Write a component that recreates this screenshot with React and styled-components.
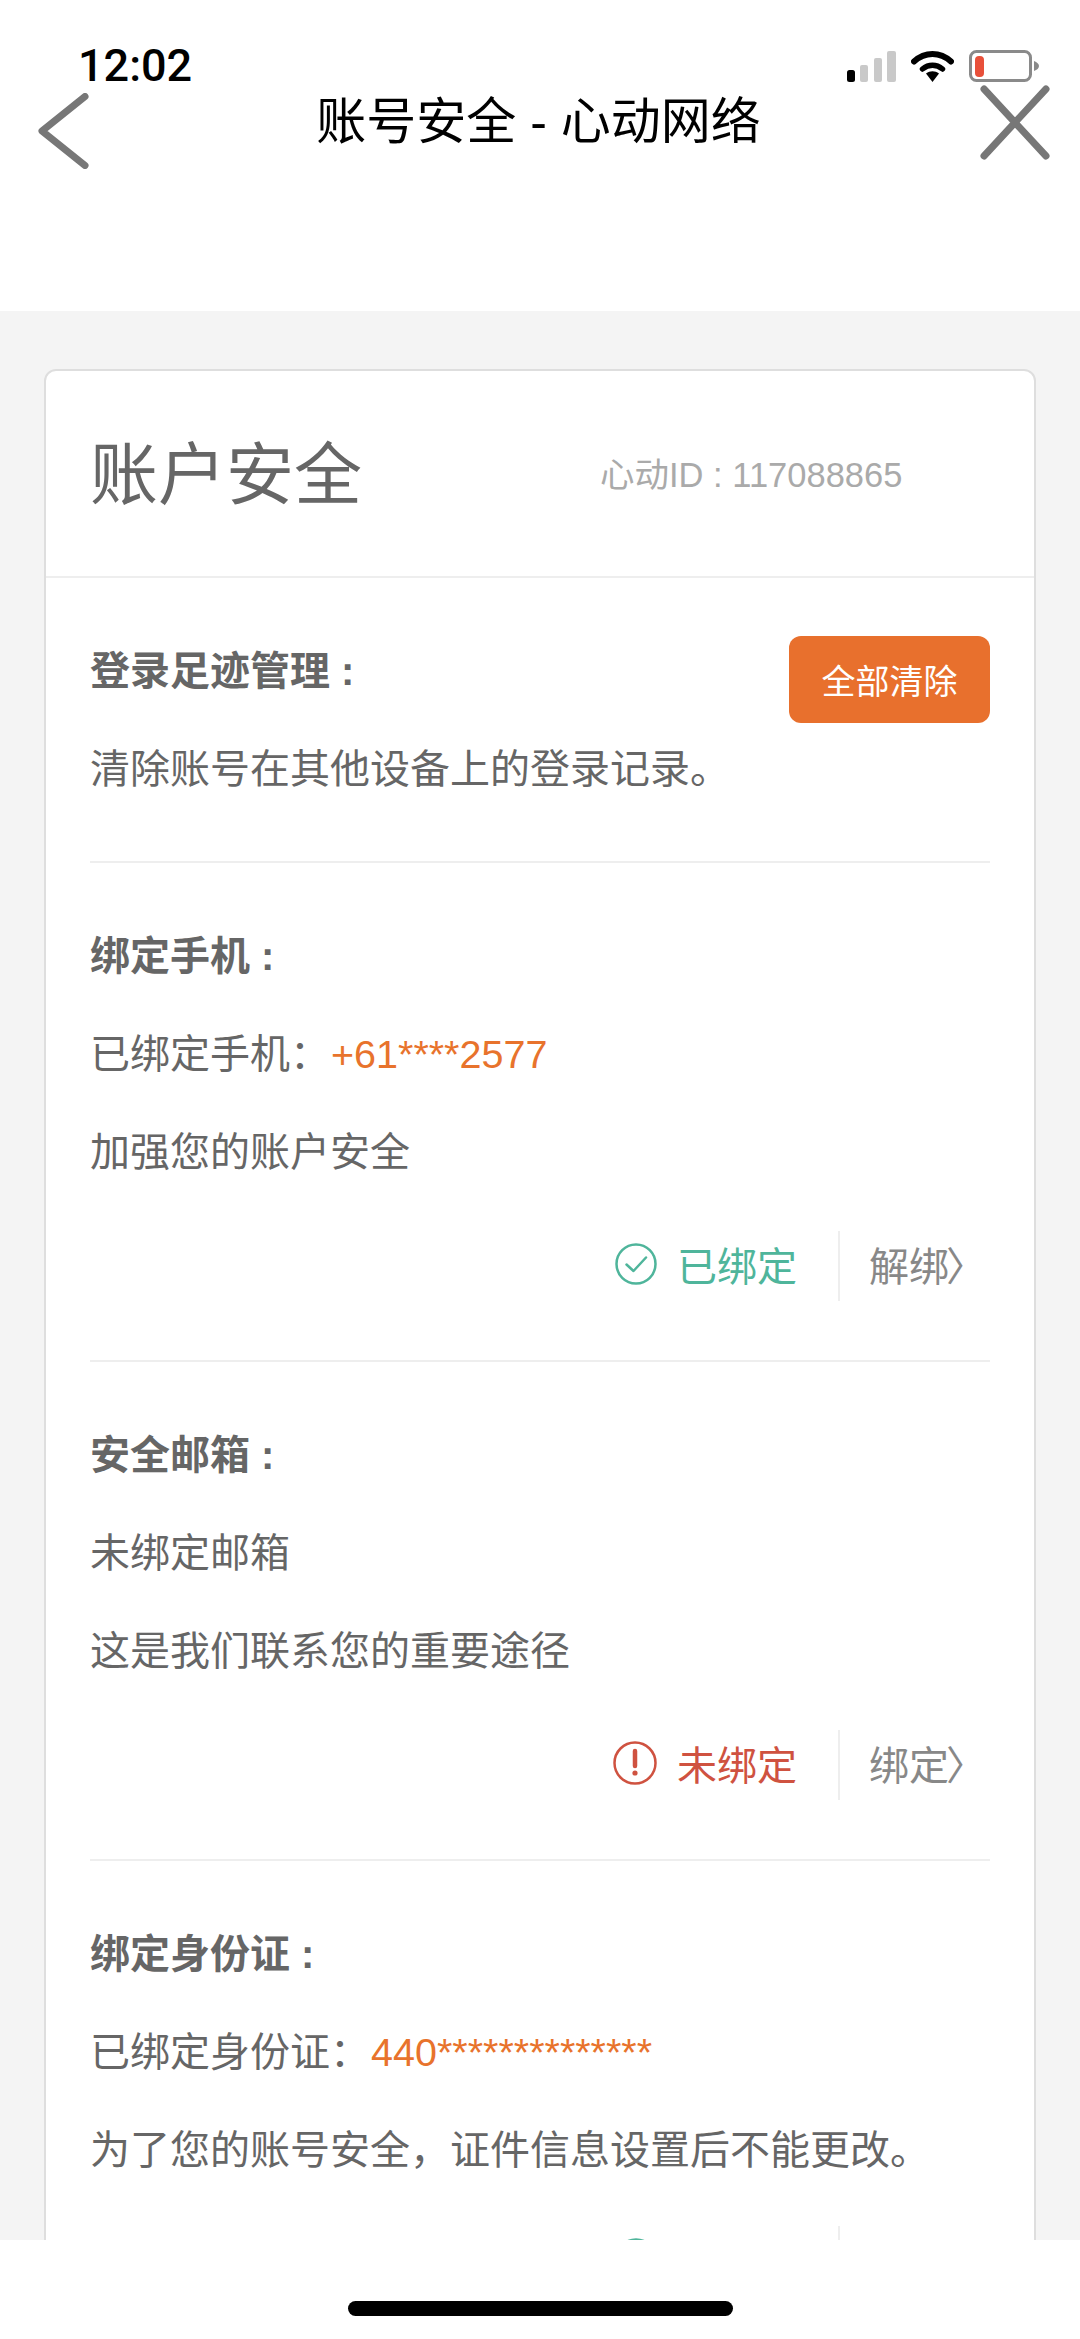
import React from 'react';
import styled, { createGlobalStyle } from 'styled-components';

const GlobalStyle = createGlobalStyle`
  html, body {
    margin: 0;
    padding: 0;
    background: #f4f4f4;
  }
  * {
    box-sizing: border-box;
  }
`;

const FONT = `"Liberation Sans", "Noto Sans CJK SC", sans-serif`;

const Screen = styled.div`
  position: relative;
  width: 1080px;
  height: 2339px;
  overflow: hidden;
  background: #f4f4f4;
  font-family: ${FONT};
  color: #666;
`;

const Top = styled.header`
  height: 311px;
  background: #fff;
`;

const StatusBar = styled.div`
  display: flex;
  justify-content: space-between;
  align-items: center;
  height: 84px;
  padding: 48px 41px 0 78px;
`;

const Time = styled.span`
  font-family: Roboto, sans-serif;
  font-size: 45px;
  font-weight: 500;
  line-height: 36px;
  color: #000;
`;

const StatusIcons = styled.div`
  display: flex;
  align-items: center;
  gap: 15px;
`;

const Nav = styled.div`
  display: flex;
  justify-content: space-between;
  align-items: flex-start;
  padding: 0 30px 0 38px;
`;

const NavIcon = styled.svg`
  display: block;
  flex: none;
  margin-top: ${({ $top }) => $top}px;
`;

const NavTitle = styled.h1`
  margin: 0;
  font-size: 50px;
  font-weight: 400;
  line-height: 76px;
  color: #000;
  transform: translateX(4px);
`;

const Card = styled.main`
  margin: 58px 44px 0;
  background: #fff;
  border: 2px solid #dedede;
  border-radius: 12px;
`;

const CardHead = styled.div`
  display: flex;
  align-items: center;
  height: 207px;
  padding-left: 44px;
  border-bottom: 2px solid #eee;
`;

const CardTitle = styled.h2`
  margin: 0 0 8px;
  font-size: 68px;
  font-weight: 400;
  color: #666;
`;

const AccountId = styled.span`
  margin: 0 0 4px 238px;
  font-size: 34.5px;
  color: #aaa;
`;

const Section = styled.section`
  position: relative;
  margin: 0 44px;
  padding: 44px 0 ${({ $tight }) => ($tight ? 43 : 59)}px;
  border-bottom: ${({ $last }) => ($last ? 'none' : '2px solid #eee')};
`;

const SectionTitle = styled.h3`
  margin: 0;
  font-size: 40px;
  font-weight: 700;
  line-height: 98px;
  color: #666;
`;

const Line = styled.p`
  margin: 0;
  font-size: 40px;
  line-height: 98px;
  color: #666;
`;

const Masked = styled.span`
  margin-left: 1px;
  font-size: 39.5px;
  color: #e8732c;
`;

const ClearButton = styled.button`
  position: absolute;
  top: 58px;
  right: 0;
  width: 201px;
  height: 87px;
  padding: 0;
  border: none;
  border-radius: 12px;
  background: #e8702d;
  color: #fff;
  font-family: ${FONT};
  font-size: 34px;
`;

const StatusRow = styled.div`
  display: flex;
  justify-content: flex-end;
  align-items: center;
  height: 70px;
  margin-top: ${({ $gap }) => $gap}px;
`;

const BindState = styled.span`
  display: flex;
  align-items: center;
  gap: 20px;
  padding: 0 41px 5px 0;
  font-size: 40px;
  color: ${({ $tone }) => $tone};
`;

const BindAction = styled.span`
  display: flex;
  align-items: center;
  height: 70px;
  padding: 0 4px 5px 29px;
  border-left: 2px solid #eee;
  font-size: 40px;
  color: #888;
`;

const Bracket = styled.span`
  margin-left: -3px;
`;

const Footer = styled.footer`
  position: absolute;
  left: 0;
  right: 0;
  bottom: 0;
  display: flex;
  justify-content: center;
  height: 99px;
  padding-top: 61px;
  background: #fff;
`;

const HomeBar = styled.div`
  width: 385px;
  height: 15px;
  border-radius: 8px;
  background: #000;
`;

const GREEN = '#4fb59b';
const RED = '#cf5240';

const Signal = () => (
  <svg width="49" height="32" viewBox="0 0 49 32">
    <rect x="0" y="20" width="8" height="12" rx="2.5" fill="#000" />
    <rect x="13" y="15" width="8" height="17" rx="2" fill="#c9c9c9" />
    <rect x="27" y="8" width="8" height="24" rx="2" fill="#c9c9c9" />
    <rect x="40" y="1" width="9" height="31" rx="2" fill="#c9c9c9" />
  </svg>
);

const Wifi = () => (
  <svg width="43" height="32" viewBox="0 0 43 32">
    <path d="M3 11.5C14 1.5 29 1.5 40 11.5" fill="none" stroke="#000" strokeWidth="6" strokeLinecap="round" />
    <path d="M11.5 19C17.5 14 25.5 14 31.5 19" fill="none" stroke="#000" strokeWidth="5.5" strokeLinecap="round" />
    <path d="M15 23.5C19 20.5 24 20.5 28 23.5L21.5 32Z" fill="#000" />
  </svg>
);

const Battery = () => (
  <svg width="70" height="32" viewBox="0 0 70 32">
    <rect x="1.5" y="1.5" width="60" height="29" rx="6" fill="#fff" stroke="#8a8a8a" strokeWidth="3" />
    <rect x="6" y="6" width="9" height="21" rx="4" fill="#e8503a" />
    <path d="M65 11C68 12 70 14 70 16C70 18 68 20 65 21Z" fill="#8a8a8a" />
  </svg>
);

const BackIcon = () => (
  <NavIcon $top={9} width="51" height="76" viewBox="0 0 51 76">
    <path d="M47 3.5L4 38L47 72.5" fill="none" stroke="#777" strokeWidth="7" strokeLinecap="round" strokeLinejoin="round" />
  </NavIcon>
);

const CloseIcon = () => (
  <NavIcon $top={1} width="70" height="75" viewBox="0 0 70 75">
    <path d="M4 4L66 71M66 4L4 71" fill="none" stroke="#777" strokeWidth="7" strokeLinecap="round" />
  </NavIcon>
);

const CheckIcon = () => (
  <svg width="42" height="42" viewBox="0 0 42 42">
    <circle cx="21" cy="21" r="19.5" fill="none" stroke={GREEN} strokeWidth="2.5" />
    <path d="M11.5 21.5L18.5 28L31 14.5" fill="none" stroke={GREEN} strokeWidth="2.5" strokeLinecap="round" strokeLinejoin="round" />
  </svg>
);

const AlertIcon = () => (
  <svg width="44" height="44" viewBox="0 0 44 44">
    <circle cx="22" cy="22" r="20.5" fill="none" stroke={RED} strokeWidth="2.5" />
    <path d="M22 10V25" stroke={RED} strokeWidth="4.5" strokeLinecap="round" />
    <circle cx="22" cy="32" r="2.6" fill={RED} />
  </svg>
);

const BindStatus = ({ bound, action, gap = 30 }) => (
  <StatusRow $gap={gap}>
    <BindState $tone={bound ? GREEN : RED}>
      {bound ? <CheckIcon /> : <AlertIcon />}
      {bound ? '已绑定' : '未绑定'}
    </BindState>
    <BindAction>{action}<Bracket>〉</Bracket></BindAction>
  </StatusRow>
);

const App = () => {
  return (
    <Screen>
      <GlobalStyle />
      <Top>
        <StatusBar>
          <Time>12:02</Time>
          <StatusIcons>
            <Signal />
            <Wifi />
            <Battery />
          </StatusIcons>
        </StatusBar>
        <Nav>
          <BackIcon />
          <NavTitle>账号安全 - 心动网络</NavTitle>
          <CloseIcon />
        </Nav>
      </Top>
      <Card>
        <CardHead>
          <CardTitle>账户安全</CardTitle>
          <AccountId>心动ID : 117088865</AccountId>
        </CardHead>
        <Section $tight>
          <SectionTitle>登录足迹管理 :</SectionTitle>
          <ClearButton>全部清除</ClearButton>
          <Line>清除账号在其他设备上的登录记录。</Line>
        </Section>
        <Section>
          <SectionTitle>绑定手机 :</SectionTitle>
          <Line>已绑定手机：<Masked>+61****2577</Masked></Line>
          <Line>加强您的账户安全</Line>
          <BindStatus bound action="解绑" />
        </Section>
        <Section>
          <SectionTitle>安全邮箱 :</SectionTitle>
          <Line>未绑定邮箱</Line>
          <Line>这是我们联系您的重要途径</Line>
          <BindStatus action="绑定" />
        </Section>
        <Section $last>
          <SectionTitle>绑定身份证 :</SectionTitle>
          <Line>已绑定身份证：<Masked>440**************</Masked></Line>
          <Line>为了您的账号安全，证件信息设置后不能更改。</Line>
          <BindStatus bound action="解绑" gap={27} />
        </Section>
      </Card>
      <Footer>
        <HomeBar />
      </Footer>
    </Screen>
  );
};

export default App;
